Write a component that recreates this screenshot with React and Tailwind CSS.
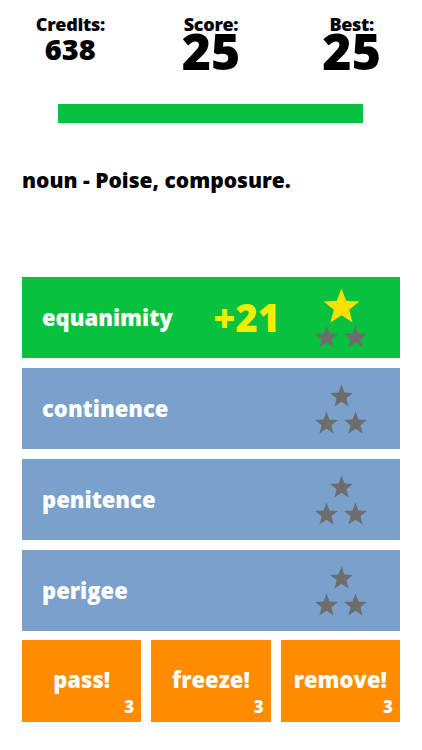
import React from 'react';

const Star = ({ className, size }) => (
  <svg viewBox="0 0 24 24" width={size} height={size} className={className}>
    <path
      fill="currentColor"
      d="M12 1.5l2.9 7.6 8.1.4-6.3 5.1 2.1 7.9L12 18l-6.8 4.5 2.1-7.9L1 9.5l8.1-.4z"
    />
  </svg>
);

const Stars = ({ gold }) => (
  <div className="flex flex-col items-center">
    {gold ? (
      <Star size={39} className="text-[#fbe000] -mb-[1px]" />
    ) : (
      <Star size={25} className="text-[#6d6d6d] mb-[2px]" />
    )}
    <div className="flex gap-[4px]">
      <Star size={25} className="text-[#6d6d6d]" />
      <Star size={25} className="text-[#6d6d6d]" />
    </div>
  </div>
);

const words = [
  { text: 'equanimity', correct: true },
  { text: 'continence' },
  { text: 'penitence' },
  { text: 'perigee' },
];

const App = () => {
  return (
    <div
      className="w-[422px] h-[750px] bg-white text-black overflow-hidden"
      style={{ fontFamily: '"Open Sans", Lato, sans-serif' }}
    >
      {/* Header */}
      <div className="grid grid-cols-3 pt-[16px] h-[80px]">
        <div className="flex flex-col items-center">
          <span className="text-[18px] font-extrabold leading-[16px] tracking-[-0.3px]">Credits:</span>
          <span className="text-[29px] font-extrabold leading-[30px] mt-[2px]">638</span>
        </div>
        <div className="flex flex-col items-center">
          <span className="text-[18px] font-extrabold leading-[16px] tracking-[-0.3px]">Score:</span>
          <span className="text-[50px] font-extrabold leading-[38px]">25</span>
        </div>
        <div className="flex flex-col items-center">
          <span className="text-[18px] font-extrabold leading-[16px] tracking-[-0.3px]">Best:</span>
          <span className="text-[50px] font-extrabold leading-[38px]">25</span>
        </div>
      </div>

      {/* Timer bar */}
      <div className="mt-[24px] ml-[58px] w-[305px] h-[19px] bg-[#07c13f]" />

      {/* Definition */}
      <div className="mt-[43px] px-[22px] text-[21px] font-extrabold leading-[28px]">
        noun - Poise, composure.
      </div>

      {/* Answers */}
      <div className="mt-[83px] px-[22px] flex flex-col gap-[10px]">
        {words.map((w) => (
          <div
            key={w.text}
            className={`h-[81px] flex items-center pl-[20px] pr-[32px] ${
              w.correct ? 'bg-[#07c13f]' : 'bg-[#7aa1cc]'
            }`}
          >
            <span className="text-white text-[22px] font-extrabold flex-1">{w.text}</span>
            {w.correct && (
              <span className="text-[#f0ee00] text-[38px] font-extrabold mr-[34px]">+21</span>
            )}
            <Stars gold={w.correct} />
          </div>
        ))}
      </div>

      {/* Powerups */}
      <div className="mt-[9px] px-[22px] grid grid-cols-3 gap-[10px]">
        {['pass!', 'freeze!', 'remove!'].map((p) => (
          <div key={p} className="relative h-[82px] bg-[#fe8b00] flex items-center justify-center">
            <span className="text-white text-[22px] font-extrabold -mt-[4px]">{p}</span>
            <span className="absolute right-[7px] bottom-[7px] text-white text-[17px] font-extrabold leading-none">3</span>
          </div>
        ))}
      </div>
    </div>
  );
};

export default App;
